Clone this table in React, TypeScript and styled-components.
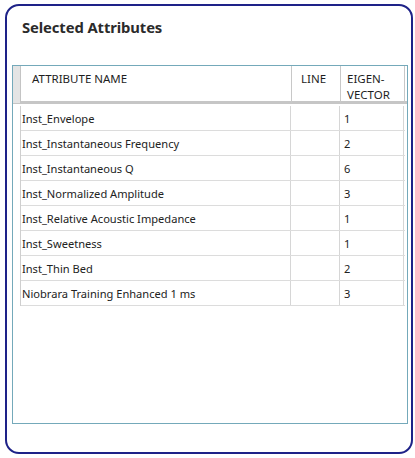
import React from "react";
import styled, { createGlobalStyle } from "styled-components";

const Global = createGlobalStyle`
  html, body { margin: 0; padding: 0; background: #ffffff; }
  body { font-family: "Segoe UI", "Noto Sans", "Open Sans", sans-serif; }
  * { box-sizing: border-box; }
`;

const Card = styled.div`
  margin: 4px 0 0 5px;
  width: 408px;
  height: 450px;
  border: 2px solid #1e2288;
  border-radius: 14px;
  background: #ffffff;
  display: flex;
  flex-direction: column;
  padding: 11px 3px 28px 5px;
`;

const Title = styled.h2`
  margin: 0 0 0 10px;
  height: 48px;
  font-family: "Noto Sans", sans-serif;
  font-weight: 700;
  font-size: 14.8px;
  color: #2b2b2b;
  letter-spacing: -0.1px;
`;

const GridBox = styled.div`
  flex: 1;
  border: 1px solid #74a9ba;
  display: flex;
  flex-direction: column;
`;

const cols = "8px 271px 49px 64px";

const HeaderRow = styled.div`
  display: grid;
  grid-template-columns: ${cols};
  height: 38px;
  border-bottom: 3px solid #c6c6c6;
`;

const Corner = styled.div`
  background: #e4e4e4;
  border-right: 1px solid #c4c4c4;
`;

const HeadCell = styled.div<{ $pad: number }>`
  padding: 5px 0 0 ${(p) => p.$pad}px;
  border-right: 1px solid #c8c8c8;
  font-family: "Noto Sans", sans-serif;
  font-size: 11.5px;
  line-height: 16px;
  color: #1e1e1e;
  text-transform: uppercase;
  white-space: pre-line;
`;

const Body = styled.div`
  margin: 2px 0 0 7px;
  border-left: 1px solid #cfcfcf;
  display: flex;
  flex-direction: column;
  width: 385px;
`;

const Row = styled.div`
  display: grid;
  grid-template-columns: 270px 49px 64px;
  height: 25px;
  border-bottom: 1px solid #dcdcdc;
`;

const Cell = styled.div<{ $pad: number }>`
  padding-left: ${(p) => p.$pad}px;
  border-right: 1px solid #d6d6d6;
  display: flex;
  align-items: center;
  font-family: "Noto Sans", sans-serif;
  font-size: 11.1px;
  color: #222222;
  white-space: nowrap;
`;

const rows: [string, string, string][] = [
  ["Inst_Envelope", "", "1"],
  ["Inst_Instantaneous Frequency", "", "2"],
  ["Inst_Instantaneous Q", "", "6"],
  ["Inst_Normalized Amplitude", "", "3"],
  ["Inst_Relative Acoustic Impedance", "", "1"],
  ["Inst_Sweetness", "", "1"],
  ["Inst_Thin Bed", "", "2"],
  ["Niobrara Training Enhanced 1 ms", "", "3"],
];

export default function App() {
  return (
    <>
      <Global />
      <Card>
        <Title>Selected Attributes</Title>
        <GridBox>
          <HeaderRow>
            <Corner />
            <HeadCell $pad={11}>Attribute Name</HeadCell>
            <HeadCell $pad={9}>Line</HeadCell>
            <HeadCell $pad={6}>{"Eigen-\nVector"}</HeadCell>
          </HeaderRow>
          <Body>
            {rows.map(([name, line, ev]) => (
              <Row key={name}>
                <Cell $pad={1}>{name}</Cell>
                <Cell $pad={4}>{line}</Cell>
                <Cell $pad={4}>{ev}</Cell>
              </Row>
            ))}
          </Body>
        </GridBox>
      </Card>
    </>
  );
}
